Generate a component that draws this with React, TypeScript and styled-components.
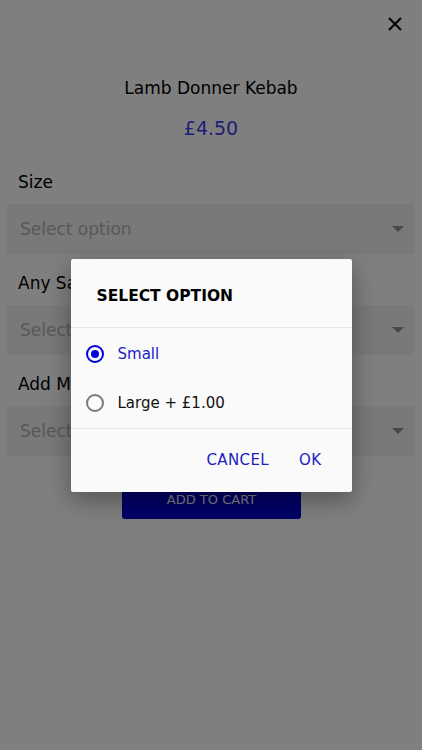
import React from "react";
import styled, { createGlobalStyle } from "styled-components";

const Global = createGlobalStyle`
  html, body { margin: 0; padding: 0; background: #ffffff; }
  body { font-family: "DejaVu Sans", "Noto Sans", sans-serif; }
  * { box-sizing: border-box; }
`;

const Page = styled.div`
  width: 422px;
  height: 750px;
  display: flex;
  flex-direction: column;
  background: #ffffff;
  position: relative;
  overflow: hidden;
`;

const CloseRow = styled.div`
  display: flex;
  justify-content: flex-end;
  padding: 16px 19px 0 0;
  height: 64px;
`;

const Title = styled.div`
  text-align: center;
  font-size: 17px;
  font-weight: 500;
  color: #000;
  line-height: 20px;
  margin-top: 14px;
`;

const Price = styled.div`
  text-align: center;
  font-size: 19px;
  color: #3c3cee;
  line-height: 24px;
  margin-top: 18px;
`;

const Form = styled.div`
  display: flex;
  flex-direction: column;
  padding: 31px 8px 0 7px;
`;

const Label = styled.div`
  font-size: 17px;
  color: #000;
  line-height: 22px;
  padding-left: 11px;
  margin-bottom: 11px;
`;

const SelectBox = styled.div`
  height: 50px;
  background: #f2f2f2;
  display: flex;
  align-items: center;
  justify-content: space-between;
  padding: 0 10px 0 13px;
  margin-bottom: 18px;
  font-size: 17px;
  color: #b0b0b0;
`;

const Caret = styled.div`
  width: 0;
  height: 0;
  border-left: 6px solid transparent;
  border-right: 6px solid transparent;
  border-top: 6px solid #909090;
`;

const CartButton = styled.div`
  align-self: center;
  width: 179px;
  height: 39px;
  background: #0000cc;
  color: #ffffff;
  border-radius: 3px;
  display: flex;
  align-items: center;
  justify-content: center;
  font-size: 13px;
  margin-top: 6px;
  margin-left: 2px;
`;

const Overlay = styled.div`
  position: absolute;
  inset: 0;
  background: rgba(0, 0, 0, 0.5);
  display: flex;
  align-items: center;
  justify-content: center;
`;

const Dialog = styled.div`
  width: 281px;
  height: 233px;
  background: #fafafa;
  border-radius: 2px;
  box-shadow: 0 8px 24px rgba(0, 0, 0, 0.35);
  display: flex;
  flex-direction: column;
`;

const DialogTitle = styled.div`
  height: 69px;
  padding: 27px 0 0 26px;
  font-size: 15.5px;
  font-weight: 600;
  color: #000;
  line-height: 20px;
  border-bottom: 1.5px solid #e6e6e6;
`;

const OptionList = styled.div`
  display: flex;
  flex-direction: column;
  padding-top: 2px;
  border-bottom: 1.5px solid #e6e6e6;
  height: 101px;
`;

const OptionRow = styled.div`
  height: 49px;
  display: flex;
  align-items: center;
  padding-left: 15px;
  gap: 14px;
`;

const Radio = styled.div<{ $on?: boolean }>`
  width: 18px;
  height: 18px;
  border-radius: 50%;
  border: 2px solid ${(p) => (p.$on ? "#0000dd" : "#7a7a7a")};
  display: flex;
  align-items: center;
  justify-content: center;
  &::after {
    content: "";
    width: 8px;
    height: 8px;
    border-radius: 50%;
    background: ${(p) => (p.$on ? "#0000dd" : "transparent")};
  }
`;

const OptionText = styled.div<{ $on?: boolean }>`
  font-size: 15px;
  color: ${(p) => (p.$on ? "#2222cc" : "#111")};
`;

const Actions = styled.div`
  flex: 1;
  display: flex;
  justify-content: flex-end;
  align-items: center;
  gap: 30px;
  padding: 0 30px 0 0;
`;

const ActionButton = styled.div`
  font-size: 15px;
  color: #2222bb;
  letter-spacing: 0.4px;
`;

export default function App() {
  return (
    <>
      <Global />
      <Page>
        <CloseRow>
          <svg width="16" height="16" viewBox="0 0 16 16">
            <path d="M2 2 L14 14 M14 2 L2 14" stroke="#000" strokeWidth="2" />
          </svg>
        </CloseRow>
        <Title>Lamb Donner Kebab</Title>
        <Price>£4.50</Price>
        <Form>
          <Label>Size</Label>
          <SelectBox>
            Select option
            <Caret />
          </SelectBox>
          <Label>Any Sauce?</Label>
          <SelectBox>
            Select option
            <Caret />
          </SelectBox>
          <Label>Add Meat?</Label>
          <SelectBox>
            Select option
            <Caret />
          </SelectBox>
          <CartButton>ADD TO CART</CartButton>
        </Form>
        <Overlay>
          <Dialog>
            <DialogTitle>SELECT OPTION</DialogTitle>
            <OptionList>
              <OptionRow>
                <Radio $on />
                <OptionText $on>Small</OptionText>
              </OptionRow>
              <OptionRow>
                <Radio />
                <OptionText>Large + £1.00</OptionText>
              </OptionRow>
            </OptionList>
            <Actions>
              <ActionButton>CANCEL</ActionButton>
              <ActionButton>OK</ActionButton>
            </Actions>
          </Dialog>
        </Overlay>
      </Page>
    </>
  );
}
